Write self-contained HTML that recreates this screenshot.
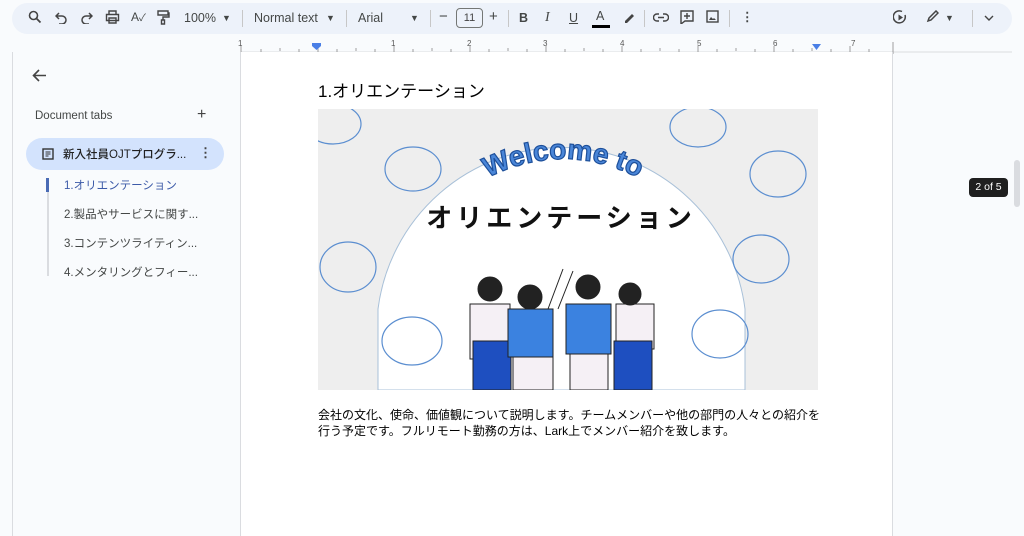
<!DOCTYPE html>
<html><head><meta charset="utf-8"><style>
*{margin:0;padding:0;box-sizing:border-box}
body{width:1024px;height:536px;overflow:hidden;background:#f9fbfd;font-family:"Liberation Sans","Noto Sans CJK JP",sans-serif;position:relative;color:#1f1f1f}
.abs{position:absolute}
.tb{left:12px;top:3px;width:1000px;height:31px;background:#edf2fa;border-radius:16px}
.t{position:absolute;font-size:12.5px;color:#444746;top:11px}
.sep{position:absolute;top:10px;width:1px;height:17px;background:#c7c7c7}
.ic{position:absolute;top:10px}
.side{left:12px;top:52px;width:229px;height:484px;background:#f9fbfd;border-left:1px solid #dadce0;border-right:1px solid #dadce0}
.page{left:241px;top:52px;width:652px;height:484px;background:#fff;border-right:1px solid #dadce0}
.outline{font-size:11.5px;color:#444746;position:absolute;left:64px}
</style></head><body>
<div class="abs tb"></div>
<svg class="ic" style="left:28px" width="14" height="14" viewBox="0 0 14 14"><circle cx="5.5" cy="5.5" r="4" fill="none" stroke="#444" stroke-width="1.6"/><path d="M8.5 8.5l4 4" stroke="#444" stroke-width="1.8"/></svg>
<svg class="ic" style="left:55px;top:12px" width="13" height="12" viewBox="0 0 13 12"><path d="M4 1L1 4l3 3M1 4h6a4 4 0 010 8H4" fill="none" stroke="#444" stroke-width="1.5"/></svg>
<svg class="ic" style="left:80px;top:12px" width="13" height="12" viewBox="0 0 13 12"><path d="M9 1l3 3-3 3M12 4H6a4 4 0 000 8h3" fill="none" stroke="#444" stroke-width="1.5"/></svg>
<svg class="ic" style="left:105px" width="15" height="14" viewBox="0 0 15 14"><path d="M4 4V1h7v3M1.5 4.5h12v6h-12zM4 8h7v5H4z" fill="none" stroke="#444" stroke-width="1.4"/></svg>
<div class="t" style="left:131px;top:9px;font-size:12px">A<span style="font-size:10px">✓</span></div>
<svg class="ic" style="left:157px" width="13" height="15" viewBox="0 0 13 15"><path d="M1 1h10v4H1zM11 3h1v4H6v3M4.5 10h3v4h-3z" fill="none" stroke="#444" stroke-width="1.4"/></svg>
<div class="t" style="left:184px">100%</div><div class="t" style="left:222px;font-size:9px;top:13px">▼</div>
<div class="sep" style="left:242px"></div>
<div class="t" style="left:254px">Normal text</div><div class="t" style="left:326px;font-size:9px;top:13px">▼</div>
<div class="sep" style="left:346px"></div>
<div class="t" style="left:358px">Arial</div><div class="t" style="left:410px;font-size:9px;top:13px">▼</div>
<div class="sep" style="left:430px"></div>
<div class="t" style="left:439px;font-size:15px;top:8px">−</div>
<div class="abs" style="left:456px;top:8px;width:27px;height:20px;border:1px solid #747775;border-radius:4px;font-size:11px;text-align:center;line-height:18px;color:#444">11</div>
<div class="t" style="left:489px;font-size:15px;top:8px">+</div>
<div class="sep" style="left:508px"></div>
<div class="t" style="left:519px;font-weight:bold">B</div>
<div class="t" style="left:545px;font-style:italic;font-family:'Liberation Serif';font-size:14px;top:10px">I</div>
<div class="t" style="left:569px;text-decoration:underline">U</div>
<div class="t" style="left:596px;top:9px">A</div><div class="abs" style="left:592px;top:25px;width:18px;height:3px;background:#000"></div>
<svg class="ic" style="left:622px" width="14" height="14" viewBox="0 0 14 14"><path d="M3 11l7-7 2 2-7 7H3z" fill="#444"/></svg>
<div class="sep" style="left:644px"></div>
<svg class="ic" style="left:653px;top:13px" width="16" height="9" viewBox="0 0 16 9"><path d="M6 1H4a3.5 3.5 0 000 7h2M10 1h2a3.5 3.5 0 010 7h-2M5 4.5h6" fill="none" stroke="#444" stroke-width="1.4"/></svg>
<svg class="ic" style="left:680px" width="14" height="14" viewBox="0 0 14 14"><path d="M1 1h12v10H5l-4 3z M7 3v6M4 6h6" fill="none" stroke="#444" stroke-width="1.4"/></svg>
<svg class="ic" style="left:706px" width="13" height="13" viewBox="0 0 13 13"><rect x="1" y="1" width="11" height="11" fill="none" stroke="#444" stroke-width="1.4"/><path d="M3 10l2-3 2 2 1-1 2 2z" fill="#444"/></svg>
<div class="sep" style="left:729px"></div>
<div class="t" style="left:741px;font-weight:bold;top:9px">⋮</div>
<svg class="ic" style="left:893px" width="15" height="15" viewBox="0 0 15 15"><path d="M12 5a6 6 0 11-3-3.5" fill="none" stroke="#444" stroke-width="1.5"/><path d="M5.5 4.5v6l4.5-3z" fill="#444"/></svg>
<svg class="ic" style="left:926px" width="13" height="13" viewBox="0 0 13 13"><path d="M2 11l1-3 7-7 2 2-7 7z" fill="none" stroke="#444" stroke-width="1.5"/></svg>
<div class="t" style="left:945px;font-size:9px;top:13px">▼</div>
<div class="sep" style="left:972px"></div>
<svg class="ic" style="left:984px;top:15px" width="10" height="6" viewBox="0 0 10 6"><path d="M1 1l4 4 4-4" fill="none" stroke="#444" stroke-width="1.4"/></svg>
<svg class="abs" style="left:0;top:36px" width="1024" height="18">
<line x1="241" y1="16" x2="1012" y2="16" stroke="#dadce0"/>
<g stroke="#888" stroke-width="0.8">
<path d="M241 10v6M261 13v3M280 12v3M299 13v3M318 10v6M337 13v3M356 12v3M375 13v3M394 10v6M413 13v3M432 12v3M451 13v3M470 10v6M489 13v3M508 12v3M527 13v3M546 10v6M565 13v3M584 12v3M603 13v3M622 10v6M641 13v3M660 12v3M679 13v3M698 10v6M717 13v3M736 12v3M755 13v3M774 10v6M793 13v3M812 12v3M831 13v3M850 10v6M869 13v3M893 6v12"/></g>
<g font-size="8" fill="#555" font-family="Liberation Sans"><text x="238" y="10">1</text><text x="391" y="10">1</text><text x="467" y="10">2</text><text x="543" y="10">3</text><text x="620" y="10">4</text><text x="697" y="10">5</text><text x="773" y="10">6</text><text x="851" y="10">7</text></g>
<path d="M312 7h9v3l-4.5 4-4.5-4z" fill="#4a7fe6"/><path d="M812 8h9l-4.5 6z" fill="#4a7fe6"/>
</svg>
<div class="abs side"></div>
<svg class="abs" style="left:32px;top:69px" width="15" height="13" viewBox="0 0 15 13"><path d="M7 1L1.5 6.5 7 12M1.5 6.5H14" fill="none" stroke="#444" stroke-width="1.6"/></svg>
<div class="abs" style="left:35px;top:110px;font-size:11.5px;color:#444746">Document tabs</div>
<div class="abs" style="left:197px;top:106px;font-size:16px;color:#444">+</div>
<div class="abs" style="left:26px;top:138px;width:198px;height:32px;background:#d3e3fd;border-radius:16px"></div>
<svg class="abs" style="left:42px;top:148px" width="12" height="12" viewBox="0 0 12 12"><rect x="1" y="1" width="10" height="10" fill="none" stroke="#333" stroke-width="1.4"/><path d="M3.5 4h5M3.5 6h5M3.5 8h3" stroke="#333" stroke-width="1.1"/></svg>
<div class="abs" style="left:63px;top:146px;font-size:11.5px;color:#1f1f1f;font-weight:500">新入社員OJTプログラ...</div>
<div class="abs" style="left:199px;top:145px;font-size:13px;font-weight:bold;color:#444">⋮</div>
<div class="abs" style="left:47px;top:178px;width:2px;height:98px;background:#dadce0"></div>
<div class="abs" style="left:46px;top:178px;width:3px;height:14px;background:#4a6bb5"></div>
<div class="outline" style="top:177px;color:#3c5aa8">1.オリエンテーション</div>
<div class="outline" style="top:206px">2.製品やサービスに関す...</div>
<div class="outline" style="top:235px">3.コンテンツライティン...</div>
<div class="outline" style="top:264px">4.メンタリングとフィー...</div>
<div class="abs page"></div>
<div class="abs" style="left:318px;top:77px;font-size:17px;color:#000">1.オリエンテーション</div>
<svg class="abs" style="left:318px;top:109px" width="500" height="281" viewBox="0 0 500 281">
<defs><path id="arc" d="M150 80 Q245 20 340 80"/></defs>
<rect width="500" height="281" fill="#eeeeee"/>
<path d="M60 281V200A185 185 0 01427 200V281z" fill="#fff" stroke="#a8c0d8" stroke-width="1"/>
<g fill="none" stroke="#5b8ed0" stroke-width="1.2">
<ellipse cx="15" cy="15" rx="28" ry="20"/><ellipse cx="95" cy="60" rx="28" ry="22"/><ellipse cx="30" cy="158" rx="28" ry="25"/><ellipse cx="94" cy="232" rx="30" ry="24"/>
<ellipse cx="380" cy="18" rx="28" ry="20"/><ellipse cx="460" cy="65" rx="28" ry="23"/><ellipse cx="443" cy="150" rx="28" ry="24"/><ellipse cx="402" cy="225" rx="28" ry="24"/></g>
<text font-family="Liberation Sans" font-weight="bold" font-size="28" fill="#4a86d8" stroke="#1d4f9a" stroke-width="1.2"><textPath href="#arc" startOffset="50%" text-anchor="middle">Welcome to</textPath></text>
<text x="243" y="118" font-family="Noto Sans CJK JP" font-weight="bold" font-size="26" fill="#111" text-anchor="middle" letter-spacing="4">オリエンテーション</text>
<g stroke="#222" stroke-width="1">
<rect x="152" y="195" width="40" height="55" fill="#f5f0f5"/><path d="M155 232h38v49h-38z" fill="#1e4fc0"/><circle cx="172" cy="180" r="12" fill="#222"/>
<path d="M190 200h45v48h-45z" fill="#3b82e0"/><path d="M195 248h40v33h-40z" fill="#f5f0f5"/><circle cx="212" cy="188" r="12" fill="#222"/>
<path d="M248 195h45v50h-45z" fill="#3b82e0"/><path d="M252 245h38v36h-38z" fill="#f5f0f5"/><circle cx="270" cy="178" r="12" fill="#222"/>
<rect x="298" y="195" width="38" height="45" fill="#f5f0f5"/><path d="M296 232h38v49h-38z" fill="#1e4fc0"/><circle cx="312" cy="185" r="11" fill="#222"/>
<path d="M230 200l15-40M240 200l15-38" fill="none"/></g>
</svg>
<div class="abs" style="left:318px;top:407px;font-size:12px;line-height:16px;color:#000;width:506px">会社の文化、使命、価値観について説明します。チームメンバーや他の部門の人々との紹介を行う予定です。フルリモート勤務の方は、Lark上でメンバー紹介を致します。</div>
<div class="abs" style="left:969px;top:178px;width:39px;height:19px;background:#1f1f1f;border-radius:4px;color:#fff;font-size:10.5px;text-align:center;line-height:19px">2 of 5</div>
<div class="abs" style="left:1014px;top:160px;width:6px;height:47px;background:#dadce0;border-radius:3px"></div>
</body></html>
